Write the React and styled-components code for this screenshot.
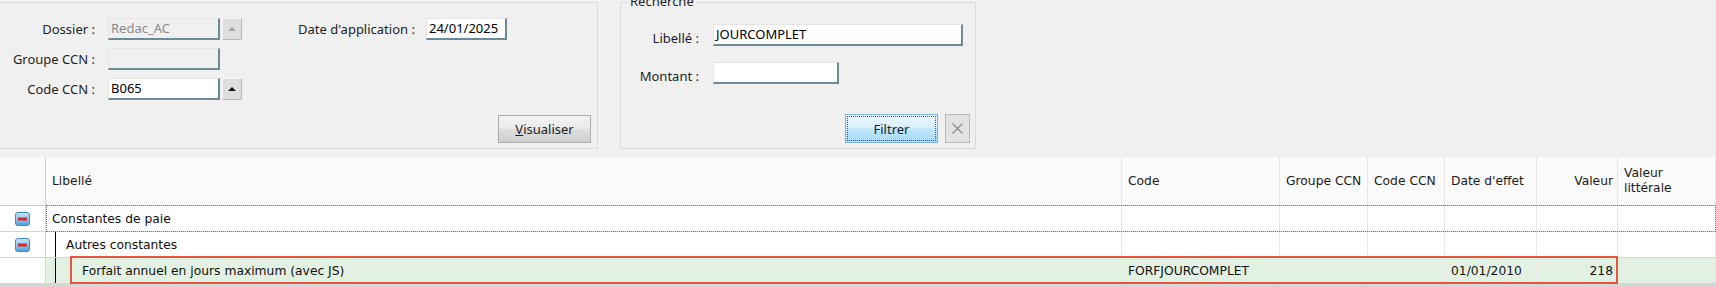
import React from 'react';
import styled, { createGlobalStyle } from 'styled-components';

const Global = createGlobalStyle`
  html, body { margin: 0; padding: 0; background: #f0f0f0; }
  body { width: 1716px; height: 287px; overflow: hidden; font-family: "Noto Sans", sans-serif; }
  * { box-sizing: border-box; }
`;

const Page = styled.div`
  width: 1716px;
  height: 287px;
  display: flex;
  flex-direction: column;
  background: #f0f0f0;
`;

const Top = styled.div`
  display: flex;
  align-items: flex-start;
  gap: 22px;
  height: 157px;
  flex: none;
`;

const Panel = styled.div`
  position: relative;
  margin-top: 2px;
  width: ${p => p.$w}px;
  height: 147px;
  border: 1px solid #dcdcdc;
  ${p => p.$noLeft && 'border-left: none;'}
  padding: ${p => p.$pad};
  display: flex;
  flex-direction: column;
  font-size: 13px;
  color: #1e1e1e;
`;

const Legend = styled.span`
  position: absolute;
  top: -10px;
  left: 7px;
  padding: 0 2px;
  line-height: 16px;
  background: #f0f0f0;
  color: #1e1e1e;
`;

const FormGrid = styled.div`
  display: grid;
  grid-template-columns: ${p => p.$cols};
  grid-auto-rows: 22px;
  row-gap: ${p => p.$gap}px;
  align-items: center;
`;

const Label = styled.label`
  text-align: ${p => (p.$left ? 'left' : 'right')};
  padding-right: ${p => (p.$left ? 0 : p.$pr)}px;
  padding-top: ${p => p.$drop || 0}px;
  white-space: nowrap;
  line-height: 18px;
  grid-column: ${p => p.$col || 'auto'};
`;

const Field = styled.div`
  width: ${p => p.$w}px;
  height: 22px;
  grid-column: ${p => p.$col || 'auto'};
  background: ${p => (p.$disabled ? '#f0f0f0' : '#ffffff')};
  color: ${p => (p.$disabled ? '#8a8a8a' : '#000')};
  border-style: solid;
  border-width: 1px 2px 2px 1px;
  border-color: #e4e4e4 #6d8a99 #6d8a99 #e4e4e4;
  padding: 0 2px;
  line-height: 19px;
  white-space: nowrap;
  overflow: hidden;
`;

const ArrowBtn = styled.div`
  width: 20px;
  height: 22px;
  grid-column: ${p => p.$col || 'auto'};
  background: #dedede;
  border-style: solid;
  border-width: 1px;
  border-color: #f6f6f6 #b8b8b8 #b8b8b8 #f6f6f6;
  display: flex;
  align-items: center;
  justify-content: center;
`;

const Tri = styled.span`
  width: 0;
  height: 0;
  border-left: 4px solid transparent;
  border-right: 4px solid transparent;
  border-bottom: 4px solid ${p => (p.$disabled ? '#a4a4a4' : '#111')};
`;

const ButtonRow = styled.div`
  margin-top: auto;
  display: flex;
  justify-content: flex-end;
  align-items: flex-end;
  gap: 7px;
`;

const Button = styled.button`
  font-family: "Noto Sans", sans-serif;
  font-size: 13px;
  width: ${p => p.$w}px;
  height: ${p => p.$h}px;
  padding: 0;
  color: ${p => (p.$primary ? '#14223a' : '#1e1e1e')};
  border: 1px solid ${p => (p.$primary ? '#7cb3de' : '#acacac')};
  background: ${p =>
    p.$primary
      ? 'linear-gradient(#ecf7fd 0%, #d9f0fc 45%, #bee6fd 55%, #a7d9f5 100%)'
      : 'linear-gradient(#f3f3f3 0%, #ebebeb 45%, #dddddd 55%, #cfcfcf 100%)'};
  ${p => p.$primary && 'outline: 1px dotted #555; outline-offset: -3px;'}
  display: flex;
  align-items: center;
  justify-content: center;
  u { text-decoration: underline; }
`;

const IconBtn = styled.button`
  width: 25px;
  height: 29px;
  padding: 0;
  border: 1px solid #b9b9b9;
  background: #e3e3e3;
  display: flex;
  align-items: center;
  justify-content: center;
`;

/* ---------- grid ---------- */

const COLS = '46px 1076px 158px 88px 77px 92px 81px 98px';

const Table = styled.div`
  display: flex;
  flex-direction: column;
  font-family: "DejaVu Sans", sans-serif;
  font-size: 12.3px;
  color: #111;
  background: #fff;
`;

const HeadRow = styled.div`
  display: grid;
  grid-template-columns: ${COLS};
  height: 49px;
  border-bottom: 1px solid #cdcdcd;
  background: #fbfbfb;
`;

const HeadCell = styled.div`
  display: flex;
  align-items: center;
  justify-content: ${p => (p.$right ? 'flex-end' : 'flex-start')};
  padding: ${p => (p.$right ? '0 4px 0 0' : '0 0 0 6px')};
  border-right: 1px solid ${p => (p.$first ? '#d4d4d4' : '#e6e6e6')};
  line-height: 15px;
  white-space: nowrap;
  color: #1a1a1a;
`;

const Row = styled.div`
  position: relative;
  display: grid;
  grid-template-columns: ${COLS};
  height: 26px;
  border-bottom: 1px solid #d6d6d6;
`;

const Cell = styled.div`
  display: flex;
  align-items: center;
  justify-content: ${p => (p.$right ? 'flex-end' : p.$center ? 'center' : 'flex-start')};
  padding: ${p => (p.$right ? '0 4px 0 0' : p.$center ? '0' : p.$tree ? '0' : '0 0 0 6px')};
  border-right: 1px solid ${p => (p.$first ? '#d4d4d4' : '#e8e8e8')};
  background: ${p => (p.$sel ? '#e2f1e2' : '#ffffff')};
  white-space: nowrap;
  overflow: hidden;
`;

const Indent = styled.span`
  align-self: stretch;
  flex: none;
  margin-left: 9px;
  width: ${p => p.$w}px;
  border-left: 1px solid #000;
  margin-bottom: -1px;
`;

const FocusBox = styled.div`
  position: absolute;
  left: 46px;
  right: 0;
  top: -1px;
  bottom: -1px;
  border: 1px dotted #7a7a7a;
  pointer-events: none;
`;

const SelBox = styled.div`
  position: absolute;
  left: 70px;
  width: 1548px;
  top: -2px;
  bottom: -1px;
  border: 2px solid #e6553c;
  pointer-events: none;
`;

const Footer = styled.div`
  height: 3px;
  background: #d6d6d6;
`;

const Minus = () => (
  <svg width="15" height="14" viewBox="0 0 15 14">
    <defs>
      <linearGradient id="mg" x1="0" y1="0" x2="0" y2="1">
        <stop offset="0" stopColor="#cfe9fb" />
        <stop offset="1" stopColor="#4a9fe0" />
      </linearGradient>
    </defs>
    <rect x="0.5" y="0.5" width="14" height="13" rx="2.5" fill="url(#mg)" stroke="#3a86c8" />
    <rect x="3" y="5.5" width="9" height="3" fill="#d42a2a" />
  </svg>
);

const XIcon = () => (
  <svg width="13" height="13" viewBox="0 0 13 13">
    <path d="M1.5 1.5 L11.5 11.5 M11.5 1.5 L1.5 11.5" stroke="#8c8c8c" strokeWidth="1.2" fill="none" />
  </svg>
);

export default function App() {
  return (
    <Page>
      <Global />
      <Top>
        <Panel $w={598} $noLeft $pad="15px 6px 5px 0">
          <FormGrid $cols="108px 114px 20px 56px 128px 81px" $gap={8}>
            <Label $pr={13}>Dossier :</Label>
            <Field $w={112} $disabled>Redac_AC</Field>
            <ArrowBtn><Tri $disabled /></ArrowBtn>
            <Label $left $col="5">Date d'application :</Label>
            <Field $w={81}>24/01/2025</Field>

            <Label $pr={13} $col="1">Groupe CCN :</Label>
            <Field $w={112} $disabled />

            <Label $pr={13} $col="1">Code CCN :</Label>
            <Field $w={112}>B065</Field>
            <ArrowBtn><Tri /></ArrowBtn>
          </FormGrid>
          <ButtonRow>
            <Button $w={93} $h={28}><u>V</u>isualiser</Button>
          </ButtonRow>
        </Panel>

        <Panel $w={356} $pad="21px 5px 5px 0">
          <Legend>Recherche</Legend>
          <FormGrid $cols="92px 250px" $gap={16}>
            <Label $pr={14} $drop={6}>Libellé :</Label>
            <Field $w={250}>JOURCOMPLET</Field>
            <Label $pr={14} $drop={6}>Montant :</Label>
            <Field $w={126} />
          </FormGrid>
          <ButtonRow>
            <Button $primary $w={93} $h={29}>Filtrer</Button>
            <IconBtn aria-label="Effacer"><XIcon /></IconBtn>
          </ButtonRow>
        </Panel>
      </Top>

      <Table>
        <HeadRow>
          <HeadCell $first />
          <HeadCell>Libellé</HeadCell>
          <HeadCell>Code</HeadCell>
          <HeadCell>Groupe CCN</HeadCell>
          <HeadCell>Code CCN</HeadCell>
          <HeadCell>Date d'effet</HeadCell>
          <HeadCell $right>Valeur</HeadCell>
          <HeadCell>Valeur<br />littérale</HeadCell>
        </HeadRow>

        <Row>
          <Cell $first $center><Minus /></Cell>
          <Cell>Constantes de paie</Cell>
          <Cell /><Cell /><Cell /><Cell /><Cell /><Cell />
          <FocusBox />
        </Row>

        <Row>
          <Cell $first $center><Minus /></Cell>
          <Cell $tree><Indent $w={11} />Autres constantes</Cell>
          <Cell /><Cell /><Cell /><Cell /><Cell /><Cell />
        </Row>

        <Row>
          <Cell $first />
          <Cell $tree $sel><Indent $w={27} />Forfait annuel en jours maximum (avec JS)</Cell>
          <Cell $sel>FORFJOURCOMPLET</Cell>
          <Cell $sel />
          <Cell $sel />
          <Cell $sel>01/01/2010</Cell>
          <Cell $sel $right>218</Cell>
          <Cell $sel />
          <SelBox />
        </Row>
      </Table>
      <Footer />
    </Page>
  );
}
